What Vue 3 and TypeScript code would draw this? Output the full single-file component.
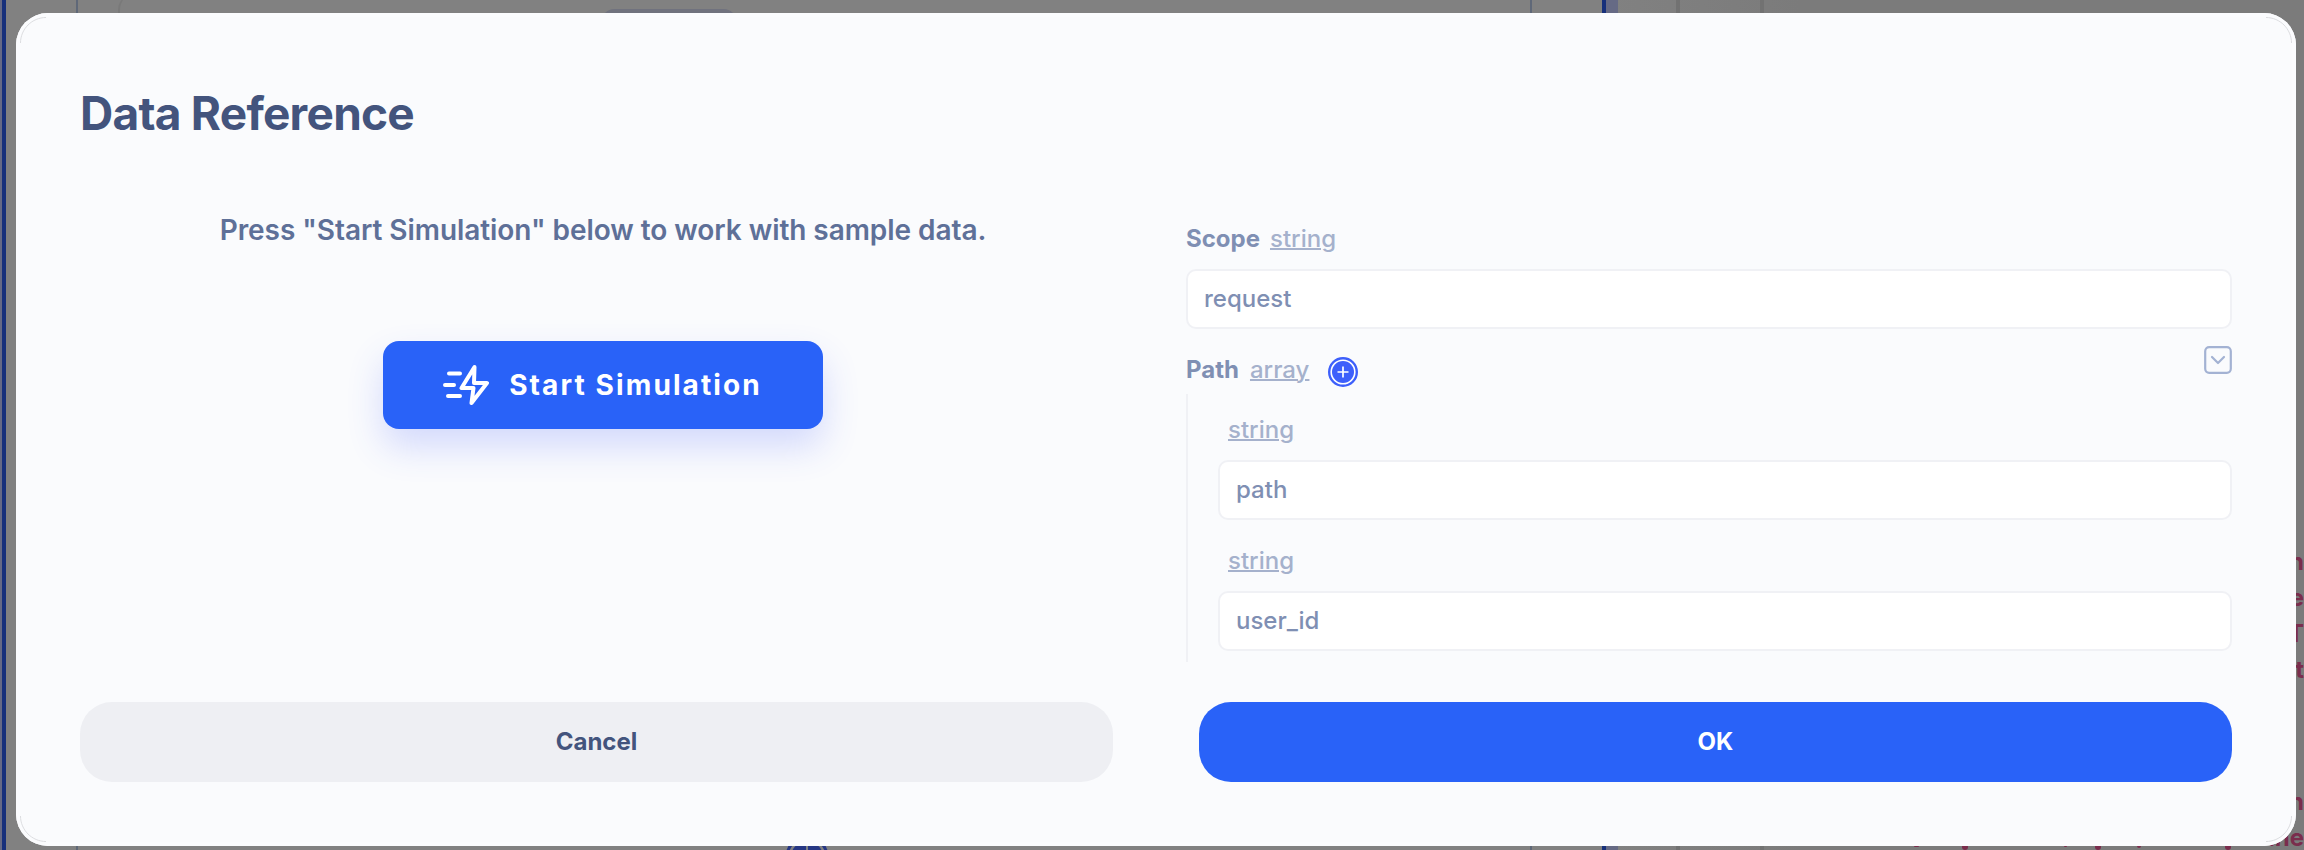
<script setup lang="ts">
import { ref } from 'vue'

interface Rule { left: number; width: number; tone: string }

const rules: Rule[] = [
  { left: 0, width: 2, tone: 'lavender' },
  { left: 2, width: 4, tone: 'navy' },
  { left: 76, width: 2, tone: 'slate' },
  { left: 1530, width: 2, tone: 'slate' },
  { left: 1602, width: 4, tone: 'navy' },
  { left: 1606, width: 12, tone: 'lavender' },
  { left: 1676, width: 4, tone: 'dim' },
  { left: 1760, width: 4, tone: 'dim' },
]
const codeEnds = [
  { text: 'h', top: 545 }, { text: 'e', top: 581 }, { text: 'T', top: 617 }, { text: 'st', top: 653 },
  { text: 'n', top: 785 }, { text: 'ine', top: 821 },
]
const tails = [
  { left: 1914, width: 5, height: 1 }, { left: 1962, width: 6, height: 4 }, { left: 2064, width: 3, height: 1 },
  { left: 2095, width: 6, height: 4 }, { left: 2137, width: 4, height: 2 }, { left: 2225, width: 6, height: 4 },
]
const scope = ref('request')
const path = ref<string[]>(['path', 'user_id'])
</script>

<template>
  <div class="screen">
    <div class="backdrop" aria-hidden="true">
      <i v-for="r in rules" :key="r.left" class="rule" :class="r.tone" :style="{ left: r.left + 'px', width: r.width + 'px' }"></i>
      <i class="card-edge"></i>
      <i class="pill"></i>
      <svg class="node" width="42" height="42" viewBox="0 0 42 42">
        <circle cx="21" cy="21" r="20" fill="none" stroke="#263784" stroke-width="3" />
        <circle cx="21" cy="21" r="16" fill="#263784" />
        <path d="M21 4v34" stroke="#7d7f83" stroke-width="2" />
      </svg>
      <span v-for="c in codeEnds" :key="c.top" class="code" :style="{ top: c.top + 'px' }">{{ c.text }}</span>
      <i v-for="t in tails" :key="t.left" class="tail" :style="{ left: t.left + 'px', width: t.width + 'px', height: t.height + 'px' }"></i>
    </div>

    <section class="modal" role="dialog">
      <svg v-for="n in 4" :key="n" class="seam" :class="'seam-' + n" width="26" height="26" viewBox="0 0 26 26">
        <path d="M.5 26C.5 12 12 .5 26 .5" />
      </svg>
      <h1>Data Reference</h1>
      <div class="columns">
        <div class="simulate">
          <p>Press "Start Simulation" below to work with sample data.</p>
          <button class="start" type="button">
            <svg width="48" height="48" viewBox="0 0 48 48">
              <path d="M8 12.500h11M4 24h9M7 35h12M33.500 6 20.500 27h12l-2 15L46 22H33l.5-16z" />
            </svg>
            <span>Start Simulation</span>
          </button>
        </div>
        <div class="form">
          <div class="label"><b>Scope</b><u>string</u></div>
          <input v-model="scope" />
          <div class="label path-label">
            <b>Path</b><u>array</u>
            <svg class="plus" width="30" height="30" viewBox="0 0 30 30">
              <circle cx="15" cy="15" r="13.800" fill="#fff" stroke="#3d5ffb" stroke-width="2.400" />
              <circle cx="15" cy="15" r="11" fill="#3d5ffb" />
              <path d="M15 9.500v11M9.500 15h11" stroke="#fff" stroke-width="1.700" />
            </svg>
            <svg class="toggle" width="28" height="28" viewBox="0 0 28 28">
              <rect x="1.200" y="1.200" width="25.600" height="25.600" rx="4" />
              <path d="m8 11 6 6 6-6" />
            </svg>
          </div>
          <div class="items">
            <div v-for="(_, i) in path" :key="i" class="item">
              <div class="label"><u>string</u></div>
              <input v-model="path[i]" />
            </div>
          </div>
        </div>
      </div>
      <footer>
        <button class="cancel" type="button">Cancel</button>
        <button class="ok" type="button">OK</button>
      </footer>
    </section>
  </div>
</template>

<style>
body { margin: 0; overflow: hidden; }
</style>
<style scoped>
* { box-sizing: border-box; }
.screen { position: relative; width: 2304px; height: 850px; padding: 13px 8px 4px 16px; overflow: hidden; font-family: Inter, "Liberation Sans", sans-serif; }
.backdrop { position: absolute; inset: 0; background: linear-gradient(90deg, #818181 0 1606px, #7b7b7b 1800px); }
.rule { position: absolute; top: 0; bottom: 0; }
.lavender { background: #666a85; }
.navy { background: #17307b; }
.slate { background: #5f6878; }
.dim { background: #727272; }
.card-edge { position: absolute; left: 118px; top: -6px; width: 1370px; height: 60px; border-left: 2px solid #797979; border-radius: 16px; }
.pill { position: absolute; left: 602px; top: 9px; width: 134px; height: 40px; border-radius: 12px; background: #70727e; }
.node { position: absolute; left: 786px; top: 836px; }
.code { position: absolute; right: 0; font-size: 24px; line-height: 33px; font-weight: 700; color: #7a2d4d; }
.tail { position: absolute; top: 846px; border-radius: 0 0 3px 3px; background: #7a2d4d; }
.modal { position: relative; display: flex; flex-direction: column; height: 833px; padding: 66px 64px 64px; border-radius: 32px; background: #fafbfd; box-shadow: inset 0 0 0 4px #fbfcfe; }
.seam { position: absolute; fill: none; stroke: #dcdde0; stroke-width: 1; }
.seam-1 { left: 4px; top: 4px; }
.seam-2 { right: 4px; top: 4px; transform: rotate(90deg); }
.seam-3 { right: 4px; bottom: 4px; transform: rotate(180deg); }
.seam-4 { left: 4px; bottom: 4px; transform: rotate(270deg); }
h1 { margin: 0 0 1px; font-size: 46px; line-height: 68px; font-weight: 700; letter-spacing: -.75px; color: #43547d; }
.columns { display: grid; grid-template-columns: 1046px 1046px; justify-content: space-between; flex: 1; }
.simulate { display: flex; flex-direction: column; align-items: center; padding-top: 62px; }
.simulate p { margin: 0; font-size: 28px; line-height: 40px; font-weight: 600; letter-spacing: -.06px; color: #5e7098; white-space: nowrap; }
button { font: inherit; border: 0; padding: 0; }
.start { display: flex; align-items: center; justify-content: center; gap: 20px; width: 440px; height: 88px; margin-top: 91px; border-radius: 16px; background: #2962f8; color: #fff; font-size: 28px; font-weight: 700; letter-spacing: 2.100px; box-shadow: 0 18px 36px rgba(62, 87, 250, .2); }
.start svg { margin-left: -3px; fill: none; stroke: #fff; stroke-width: 4; stroke-linecap: round; stroke-linejoin: round; }
.form { padding-top: 71px; }
.label { display: flex; align-items: center; height: 40px; font-size: 24px; line-height: 40px; color: #7f8fb3; }
.label b { font-weight: 700; margin-right: 10px; }
.label u { color: #a5b1cc; font-weight: 500; text-decoration-thickness: 2px; }
input { display: block; width: 100%; height: 60px; margin: 10px 0 0; padding: 0 16px 2px; border: 2px solid #f0f1f5; border-radius: 10px; background: #fff; color: #7f8fb3; font: 500 24px Inter, "Liberation Sans", sans-serif; outline: 0; }
.path-label { margin-top: 21px; }
.path-label b { margin-right: 11px; }
.plus { margin-left: 19px; margin-top: 3px; }
.toggle { margin-left: auto; align-self: flex-start; margin-top: -4px; fill: none; stroke: #a3b2d3; stroke-width: 2.200; stroke-linecap: round; stroke-linejoin: round; }
.items { height: 268px; margin-top: 4px; padding: 16px 0 0 30px; border-left: 2px solid #f0f1f5; }
.item + .item { margin-top: 21px; }
.item .label { padding-left: 10px; }
footer { display: grid; grid-template-columns: 1033px 1033px; justify-content: space-between; flex: none; }
footer button { height: 80px; padding-bottom: 1px; border-radius: 32px; font-size: 24px; font-weight: 700; }
.cancel { background: #eeeff3; color: #43547d; }
.ok { background: #2962f8; color: #fff; }
</style>
